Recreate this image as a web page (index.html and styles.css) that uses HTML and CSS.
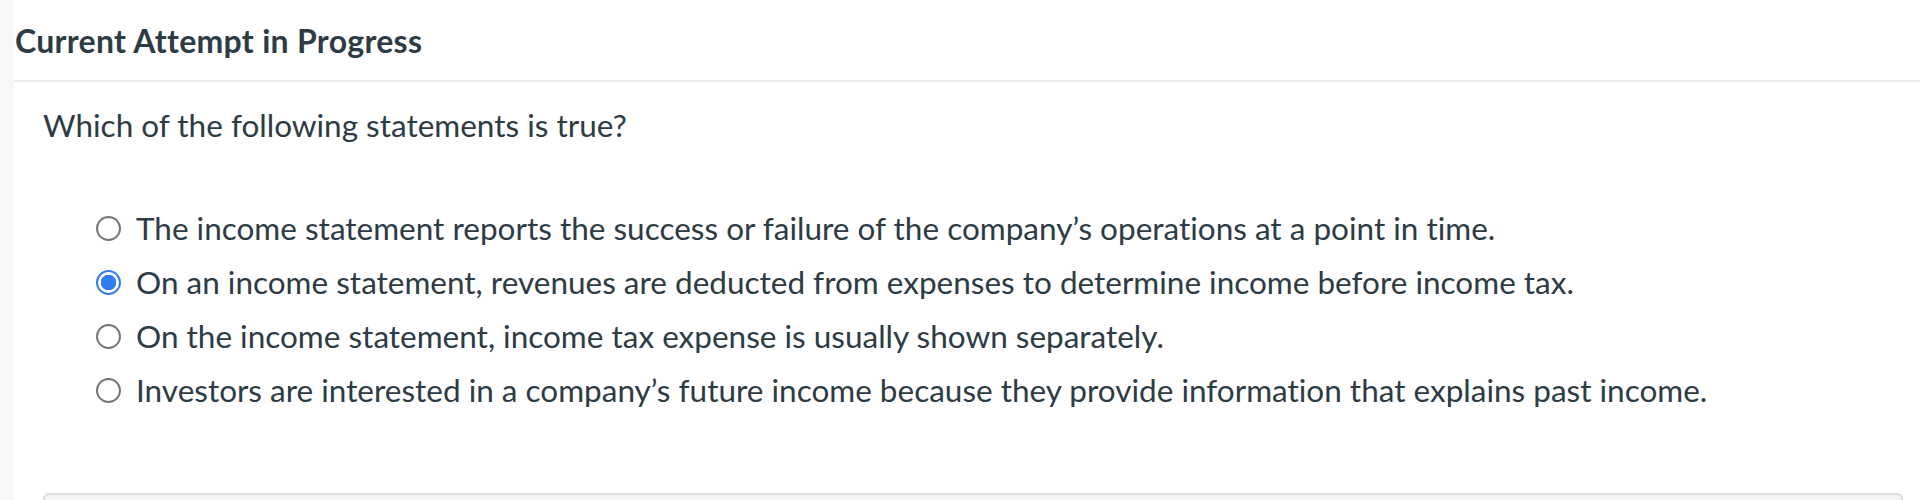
FILE: index.html
```html
<!DOCTYPE html>
<html lang="en">
<head>
<meta charset="utf-8">
<title>Current Attempt in Progress</title>
<link rel="stylesheet" href="styles.css">
</head>
<body>
<div class="page">
  <div class="rail"></div>
  <main class="main">
    <h1 class="header">Current Attempt in Progress</h1>
    <section class="content">
      <p class="question">Which of the following statements is true?</p>
      <ul class="options">
        <li class="option"><span class="radio"></span><span class="label">The income statement reports the success or failure of the company’s operations at a point in time.</span></li>
        <li class="option"><span class="radio checked"></span><span class="label">On an income statement, revenues are deducted from expenses to determine income before income tax.</span></li>
        <li class="option"><span class="radio"></span><span class="label">On the income statement, income tax expense is usually shown separately.</span></li>
        <li class="option"><span class="radio"></span><span class="label">Investors are interested in a company’s future income because they provide information that explains past income.</span></li>
      </ul>
      <div class="panel"></div>
    </section>
  </main>
</div>
</body>
</html>
```

FILE: styles.css
```css
html, body {
  margin: 0;
  padding: 0;
  background: #ffffff;
}
body {
  font-family: Lato, "Open Sans", sans-serif;
  font-variant-ligatures: no-common-ligatures;
  color: #2d3b45;
  height: 500px;
  overflow: hidden;
}
.page {
  display: flex;
  height: 500px;
  overflow: hidden;
}
.rail {
  width: 14px;
  flex: 0 0 14px;
  background: #f7f7f7;
}
.main {
  flex: 1;
  min-width: 0;
}
.header {
  margin: 0;
  padding: 23px 0 21px 1px;
  font-size: 32px;
  line-height: 36px;
  font-weight: 700;
  letter-spacing: 0.3px;
  border-bottom: 2px solid #ececec;
}
.content {
  padding: 25px 17px 0 29px;
}
.question {
  margin: 0;
  font-size: 31.5px;
  line-height: 36px;
}
.options {
  list-style: none;
  margin: 58px 0 0 53px;
  padding: 0;
}
.option {
  display: flex;
  align-items: center;
  height: 54px;
  font-size: 31.5px;
  line-height: 36px;
}
.radio {
  flex: 0 0 auto;
  box-sizing: border-box;
  width: 25px;
  height: 25px;
  border: 2px solid #767676;
  border-radius: 50%;
  margin-right: 15px;
  background: #fff;
}
.radio.checked {
  border-color: #2f7cf5;
  background: radial-gradient(circle, #2f7cf5 0 7.5px, #fff 8px);
}
.panel {
  margin-top: 76px;
  height: 5px;
  background: #f4f4f4;
  border: 2px solid #dedede;
  border-bottom: none;
  border-radius: 6px 6px 0 0;
}
```
